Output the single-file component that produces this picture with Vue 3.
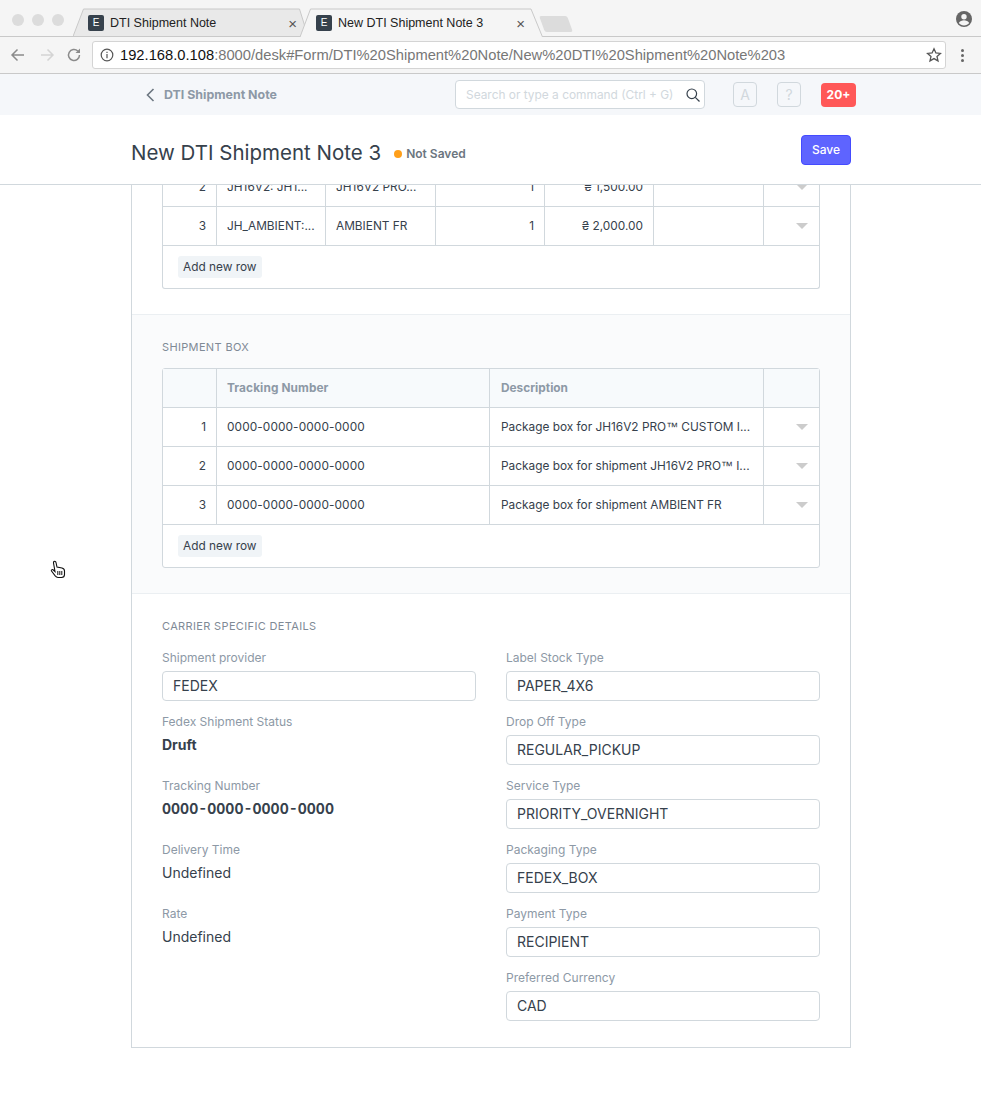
<template>
  <div class="page">
    <div class="tabstrip">
      <div class="lights"><i></i><i></i><i></i></div>
      <div class="tab inactive">
        <svg class="tabshape" width="235" height="29" viewBox="0 0 235 29"><path d="M0 28.500 10.500 1H226.500L235 28.500Z" fill="#e9e9e9" stroke="#c9c9c9" /></svg>
        <span class="fav">E</span>
        <span class="tab-title">DTI Shipment Note</span>
        <span class="tab-x">×</span>
      </div>
      <div class="tab active">
        <svg class="tabshape" width="243" height="29" viewBox="0 0 243 29"><path d="M0 29 10.500 1H231L242.500 29Z" fill="#f5f5f5" /><path d="M0 29 10.500 1H231L242.500 29" fill="none" stroke="#c9c9c9" /></svg>
        <span class="fav">E</span>
        <span class="tab-title">New DTI Shipment Note 3</span>
        <span class="tab-x">×</span>
      </div>
      <div class="newtab"></div>
      <svg class="profile" width="18" height="18" viewBox="0 0 18 18">
        <circle cx="9" cy="9" r="8" fill="#666" />
        <circle cx="9" cy="6.800" r="2.700" fill="#f5f5f5" />
        <path d="M3.800 13c1-2 3.200-2.800 5.200-2.800s4.200.8 5.200 2.800c-1.200 1.500-3.100 2.400-5.200 2.400S5 14.500 3.800 13z" fill="#f5f5f5" />
      </svg>
    </div>
    <div class="addrbar">
      <svg class="nav back" width="16" height="16" viewBox="0 0 16 16" fill="none" stroke="#8b8b8b" stroke-width="1.500"><path d="M14 8H2M7.500 2.500 2 8l5.500 5.500" /></svg>
      <svg class="nav" width="16" height="16" viewBox="0 0 16 16" fill="none" stroke="#d4d4d4" stroke-width="1.500"><path d="M2 8h12M8.500 2.500 14 8l-5.500 5.500" /></svg>
      <svg class="nav" width="16" height="16" viewBox="0 0 16 16" fill="none" stroke="#8b8b8b" stroke-width="1.500"><path d="M13.500 8a5.500 5.500 0 1 1-1.700-4" /><path d="M14 1.500V6H9.500z" fill="#8b8b8b" stroke="none" /></svg>
      <div class="omni">
        <svg width="14" height="14" viewBox="0 0 14 14" fill="none" stroke="#555" stroke-width="1.200"><circle cx="7" cy="7" r="5.800" /><path d="M7 6v4.200M7 3.700v1.200" /></svg>
        <span class="url"><b>192.168.0.108</b>:8000/desk#Form/DTI%20Shipment%20Note/New%20DTI%20Shipment%20Note%203</span>
        <svg class="star" width="16" height="16" viewBox="0 0 16 16" fill="none" stroke="#555" stroke-width="1.300"><path d="M8 1.800l1.900 4.200 4.500.4-3.400 3 1 4.500L8 11.600l-4 2.300 1-4.500-3.400-3 4.500-.4z" /></svg>
      </div>
      <div class="kebab"><i></i><i></i><i></i></div>
    </div>

    <div class="navbar">
      <div class="crumb">
        <svg width="9" height="14" viewBox="0 0 9 14" fill="none" stroke="#6c7680" stroke-width="1.600"><path d="M7.500 1 1.500 7l6 6" /></svg>
        <span>DTI Shipment Note</span>
      </div>
      <div class="search">
        <span>Search or type a command (Ctrl + G)</span>
        <svg width="14" height="14" viewBox="0 0 14 14" fill="none" stroke="#36414c" stroke-width="1.200"><circle cx="5.800" cy="5.800" r="4.800" /><path d="M9.300 9.300 13.500 13.500" /></svg>
      </div>
      <div class="navbtn">A</div>
      <div class="navbtn">?</div>
      <div class="badge">20+</div>
    </div>

    <div class="pagehead">
      <div class="title-wrap">
        <h1>New DTI Shipment Note 3</h1>
        <span class="status"><i></i>Not Saved</span>
      </div>
      <button class="save">Save</button>
    </div>

    <div class="form">
      <section class="items">
        <div class="grid cut">
          <div class="row" v-for="row in itemRows" :key="row.no">
            <div class="c cno">{{ row.no }}</div>
            <div class="c citem">{{ row.item }}</div>
            <div class="c cname">{{ row.name }}</div>
            <div class="c cqty">{{ row.qty }}</div>
            <div class="c crate">{{ row.rate }}</div>
            <div class="c cblank"></div>
            <div class="c cedit"><span class="caret"></span></div>
          </div>
          <div class="gridfoot"><span class="addrow">Add new row</span></div>
        </div>
      </section>

      <section class="boxes">
        <div class="sechead">SHIPMENT BOX</div>
        <div class="grid">
          <div class="row head">
            <div class="c bno"></div>
            <div class="c btrack">Tracking Number</div>
            <div class="c bdesc">Description</div>
            <div class="c cedit"></div>
          </div>
          <div class="row" v-for="box in boxRows" :key="box.no">
            <div class="c bno">{{ box.no }}</div>
            <div class="c btrack">0000-0000-0000-0000</div>
            <div class="c bdesc">
              <span>{{ box.before }}<span v-if="box.after" class="tm">™</span>{{ box.after }}</span>
            </div>
            <div class="c cedit"><span class="caret"></span></div>
          </div>
          <div class="gridfoot"><span class="addrow">Add new row</span></div>
        </div>
      </section>

      <section class="carrier">
        <div class="sechead">CARRIER SPECIFIC DETAILS</div>
        <div class="cols">
          <div class="col">
            <div class="field" v-for="f in leftFields" :key="f.label">
              <label>{{ f.label }}</label>
              <div v-if="f.input" class="input">{{ f.value }}</div>
              <div v-else class="value" :class="{ strong: f.strong }">{{ f.value }}</div>
            </div>
          </div>
          <div class="col">
            <div class="field" v-for="f in rightFields" :key="f.label">
              <label>{{ f.label }}</label>
              <div class="input">{{ f.value }}</div>
            </div>
          </div>
        </div>
      </section>
    </div>

    <svg class="cursor" width="16" height="20" viewBox="0 0 16 20">
      <path d="M4 1.500c.8-.6 1.800 0 2 1l1 4.500 5 1c1.500.4 2.500 1.300 2.500 3v3.500c0 1.800-1.300 3-3 3H8c-1.300 0-2-.6-2.800-1.600L1.500 11c-.6-.9.500-1.900 1.500-1.200L5 11.500 3.500 3c-.1-.6 0-1.100.5-1.500z" fill="#fff" stroke="#111" stroke-width="1.100" />
      <path d="M7.800 11v4M9.800 11v4M11.800 11v4" stroke="#111" stroke-width="1" />
    </svg>
  </div>
</template>

<script setup>
const itemRows = [
  { no: 2, item: 'JH16V2: JH1...', name: 'JH16V2 PRO...', qty: 1, rate: '₴ 1,500.00' },
  { no: 3, item: 'JH_AMBIENT:...', name: 'AMBIENT FR', qty: 1, rate: '₴ 2,000.00' }
]

const boxRows = [
  { no: 1, before: 'Package box for JH16V2 PRO', after: ' CUSTOM I...' },
  { no: 2, before: 'Package box for shipment JH16V2 PRO', after: ' I...' },
  { no: 3, before: 'Package box for shipment AMBIENT FR', after: '' }
]

const leftFields = [
  { label: 'Shipment provider', value: 'FEDEX', input: true },
  { label: 'Fedex Shipment Status', value: 'Druft', strong: true },
  { label: 'Tracking Number', value: '0000-0000-0000-0000', strong: true },
  { label: 'Delivery Time', value: 'Undefined' },
  { label: 'Rate', value: 'Undefined' }
]

const rightFields = [
  { label: 'Label Stock Type', value: 'PAPER_4X6' },
  { label: 'Drop Off Type', value: 'REGULAR_PICKUP' },
  { label: 'Service Type', value: 'PRIORITY_OVERNIGHT' },
  { label: 'Packaging Type', value: 'FEDEX_BOX' },
  { label: 'Payment Type', value: 'RECIPIENT' },
  { label: 'Preferred Currency', value: 'CAD' }
]
</script>

<style>
html, body { background: #fff; }
</style>

<style scoped>
.page { position: relative; width: 981px; height: 1108px; overflow: hidden; font-family: Inter, "Liberation Sans", sans-serif; color: #36414c; background: #fff; }

/* browser chrome */
.tabstrip { height: 37px; background: #f5f5f5; display: flex; align-items: flex-end; border-bottom: 1px solid #c9c9c9; box-sizing: border-box; position: relative; }
.lights { display: flex; gap: 8px; position: absolute; left: 12px; top: 14px; }
.lights i { width: 12px; height: 12px; border-radius: 50%; background: #dcdcdc; }
.tab { position: relative; height: 29px; padding-top: 1px; margin-bottom: -1px; display: flex; align-items: center; box-sizing: border-box; font: 12.5px "Liberation Sans", Arial, sans-serif; color: #222; flex: none; }
.tabshape { position: absolute; left: 0; top: 0; }
.tab > span { position: relative; }
.tab.inactive { width: 235px; margin-left: 73px; padding-left: 15px; }
.tab.active { width: 243px; margin-left: -8px; padding-left: 16px; }
.fav { width: 16px; height: 16px; background: #36414c; color: #fff; border-radius: 2px; font-size: 10px; line-height: 16px; text-align: center; flex: none; }
.tab-title { margin-left: 6px; flex: 1; }
.tab-x { color: #555; font-size: 15px; }
.inactive .tab-x { margin-right: 11px; }
.active .tab-x { margin-right: 18px; }
.newtab { width: 28px; height: 16px; margin-left: -1px; margin-bottom: 4px; background: #dcdcdc; border-radius: 2px; transform: skewX(20deg); }
.profile { position: absolute; right: 8px; top: 10px; }
.addrbar { height: 37px; background: #f5f5f5; border-bottom: 1px solid #c9c9c9; box-sizing: border-box; display: flex; align-items: center; padding-left: 10px; }
.nav { flex: none; margin-right: 11px; }
.nav.back { margin-right: 13px; }
.omni { width: 854px; height: 28px; margin-left: -1px; background: #fff; border: 1px solid #d4d4d4; border-radius: 3px; box-sizing: border-box; display: flex; align-items: center; padding: 0 3px 0 7px; gap: 6px; flex: none; }
.url { flex: 1; font: 14.72px "Liberation Sans", Arial, sans-serif; color: #777; white-space: nowrap; }
.url b { font-weight: 400; color: #111; }
.kebab { display: flex; flex-direction: column; gap: 2px; margin-left: 15px; }
.kebab i { width: 3px; height: 3px; border-radius: 50%; background: #666; }

/* app navbar */
.navbar { height: 41px; background: #f5f7fa; display: flex; align-items: center; box-sizing: border-box; padding-left: 146px; position: relative; }
.crumb { width: 309px; display: flex; align-items: center; gap: 9px; font-size: 12.4px; font-weight: 700; color: #8d99a6; }
.search { width: 250px; height: 29px; background: #fff; border: 1px solid #d1d8dd; border-radius: 4px; box-sizing: border-box; display: flex; align-items: center; justify-content: space-between; padding: 0 4px 0 10px; font-size: 11.9px; color: #d1d8dd; white-space: nowrap; }
.navbtn { width: 24px; height: 25px; margin-left: 28px; border: 1px solid #d1d8dd; border-radius: 4px; box-sizing: border-box; color: #d1d8dd; display: flex; align-items: center; justify-content: center; font-size: 14px; }
.navbtn + .navbtn { margin-left: 20px; }
.badge { width: 35px; height: 24px; margin-left: 20px; background: #ff5858; color: #fff; border-radius: 4px; font-size: 12px; font-weight: 700; display: flex; align-items: center; justify-content: center; }

.pagehead { height: 70px; background: #fff; border-bottom: 1px solid #d1d8dd; box-sizing: border-box; display: flex; align-items: center; padding: 0 130px 0 131px; position: relative; z-index: 2; }
.title-wrap { display: flex; align-items: center; margin-top: 8px; }
.pagehead h1 { margin: 0; font-size: 20.5px; font-weight: 400; color: #36414c; line-height: 1; }
.status { display: inline-flex; align-items: center; gap: 4px; margin-left: 13px; font-size: 12px; font-weight: 600; color: #6c7680; }
.status i { width: 8px; height: 8px; border-radius: 50%; background: #ff9f1a; }
.save { margin-left: auto; width: 50px; height: 30px; background: #5e64ff; border: 1px solid #444bff; border-radius: 4px; color: #fff; font: 500 12px Inter, sans-serif; padding: 0; }

/* form */
.form { width: 720px; margin-left: 131px; box-sizing: border-box; border: 1px solid #d1d8dd; border-top: 0; height: 863px; }
section { box-sizing: border-box; border-bottom: 1px solid #ebeff2; padding: 0 30px; }
.items { height: 130px; overflow: hidden; }
.boxes { height: 279px; background: #fafbfc; padding-top: 26px; }
.carrier { height: 452px; border-bottom: 0; padding-top: 26px; }
.sechead { font-size: 11px; letter-spacing: .35px; color: #7f8a96; line-height: 13px; margin-bottom: 14px; }
.carrier .sechead { margin-bottom: 17px; }
.grid { border: 1px solid #d1d8dd; border-radius: 3px; background: #fff; font-size: 11.85px; }
.grid.cut { border-top: 0; border-radius: 0 0 3px 3px; margin-top: -17px; }
.row { display: flex; height: 39px; border-bottom: 1px solid #d1d8dd; box-sizing: border-box; }
.row.head { background: #f7fafc; font-weight: 700; color: #8d99a6; }
.c { box-sizing: border-box; padding: 0 10px 1px; border-right: 1px solid #d1d8dd; display: flex; align-items: center; white-space: nowrap; flex: none; overflow: hidden; }
.cno { width: 54px; justify-content: flex-end; }
.citem { width: 109px; }
.cname { width: 110px; }
.cqty { width: 109px; justify-content: flex-end; }
.crate { width: 109px; justify-content: flex-end; }
.cblank { width: 110px; }
.cedit { flex: 1; border-right: 0; justify-content: flex-end; padding-right: 11px; }
.bno { width: 54px; justify-content: flex-end; }
.btrack { width: 273px; letter-spacing: .1px; }
.bdesc { width: 274px; padding-left: 11px; }
.tm { font-family: "Liberation Sans", sans-serif; }
.caret { width: 0; height: 0; margin-top: 1px; border-left: 6px solid transparent; border-right: 6px solid transparent; border-top: 6px solid #ccc; }
.gridfoot { height: 42px; display: flex; align-items: center; padding-left: 15px; box-sizing: border-box; }
.addrow { background: #f0f4f7; border-radius: 3px; padding: 0 5px; height: 22px; line-height: 22px; color: #36414c; }
.cols { display: grid; grid-template-columns: 314px 314px; column-gap: 30px; }
.field { height: 64px; }
.field label { display: block; font-size: 12px; color: #8d99a6; line-height: 15px; margin-bottom: 6px; }
.input { height: 30px; box-sizing: border-box; border: 1px solid #d1d8dd; border-radius: 4px; padding: 0 10px; font-size: 14px; line-height: 28px; color: #36414c; }
.value { font-size: 14px; line-height: 20px; margin-top: 6px; color: #36414c; font-variant-numeric: tabular-nums; }
.value.strong { font-weight: 700; }
.cursor { position: absolute; left: 50px; top: 560px; }
</style>
